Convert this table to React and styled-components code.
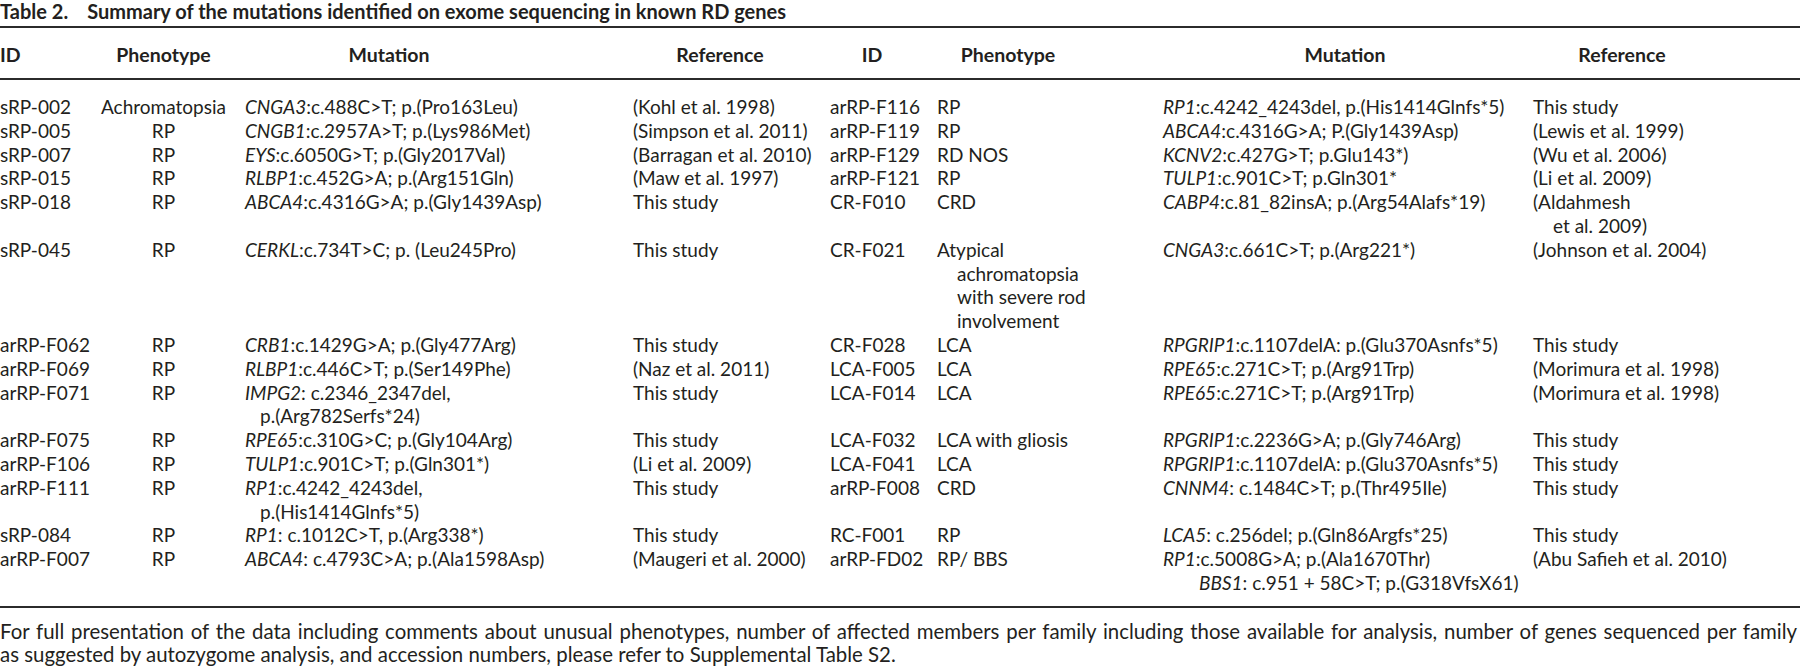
import React from "react";
import styled, { createGlobalStyle } from "styled-components";

const GlobalStyle = createGlobalStyle`
  html, body { margin: 0; padding: 0; background: #ffffff; }
  body {
    font-family: "Lato", "Open Sans", "Liberation Sans", sans-serif;
    color: #231f20;
  }
`;

const COLUMNS = "82px 163px 388px 197px 107px 226px 370px 1fr";

const Page = styled.div`
  width: 1800px;
  font-size: 19px;
`;

const Title = styled.h1`
  margin: 0 0 4px 0;
  font-size: 20px;
  line-height: 22px;
  font-weight: 700;
  display: flex;
  gap: 19px;
  white-space: nowrap;
`;

const HeaderRow = styled.div`
  display: grid;
  grid-template-columns: ${COLUMNS};
  border-top: 2px solid #2b2b2b;
  border-bottom: 2px solid #2b2b2b;
  padding: 15px 0 11px 0;
`;

const HeadCell = styled.div`
  font-size: 19.5px;
  font-weight: 700;
  line-height: 24px;
  text-align: ${(p) => (p.$left ? "left" : "center")};
  padding-right: ${(p) => p.$shift || 0}px;
  white-space: nowrap;
`;

const Body = styled.div`
  display: grid;
  grid-template-columns: ${COLUMNS};
  border-bottom: 2px solid #2b2b2b;
  padding: 15px 0 11px 0;
  line-height: 23.8px;
`;

const Cell = styled.div`
  text-align: ${(p) => (p.$center ? "center" : "left")};
  white-space: nowrap;
`;

const Line = styled.div`
  padding-left: ${(p) => p.$indent || 0}px;
`;

const Gene = styled.i`
  font-style: italic;
`;

const Footnote = styled.div`
  padding: 12px 3px 0 0;
  font-size: 20.4px;
  line-height: 23px;
`;

const FootLine = styled.div`
  white-space: nowrap;
  text-align: ${(p) => (p.$justify ? "justify" : "left")};
  text-align-last: ${(p) => (p.$justify ? "justify" : "auto")};
`;

const headers = [
  { label: "ID", left: true },
  { label: "Phenotype" },
  { label: "Mutation", shift: 100 },
  { label: "Reference", shift: 23 },
  { label: "ID", shift: 23 },
  { label: "Phenotype", shift: 84 },
  { label: "Mutation", shift: 6 },
  { label: "Reference", shift: 89 },
];

const m = (g, t, indent = 0) => ({ g, t, indent });

const rows = [
  {
    id: "sRP-002", ph: ["Achromatopsia"], mut: [m("CNGA3", ":c.488C>T; p.(Pro163Leu)")], ref: ["(Kohl et al. 1998)"],
    id2: "arRP-F116", ph2: ["RP"], mut2: [m("RP1", ":c.4242_4243del, p.(His1414Glnfs*5)")], ref2: ["This study"],
  },
  {
    id: "sRP-005", ph: ["RP"], mut: [m("CNGB1", ":c.2957A>T; p.(Lys986Met)")], ref: ["(Simpson et al. 2011)"],
    id2: "arRP-F119", ph2: ["RP"], mut2: [m("ABCA4", ":c.4316G>A; P.(Gly1439Asp)")], ref2: ["(Lewis et al. 1999)"],
  },
  {
    id: "sRP-007", ph: ["RP"], mut: [m("EYS", ":c.6050G>T; p.(Gly2017Val)")], ref: ["(Barragan et al. 2010)"],
    id2: "arRP-F129", ph2: ["RD NOS"], mut2: [m("KCNV2", ":c.427G>T; p.Glu143*)")], ref2: ["(Wu et al. 2006)"],
  },
  {
    id: "sRP-015", ph: ["RP"], mut: [m("RLBP1", ":c.452G>A; p.(Arg151Gln)")], ref: ["(Maw et al. 1997)"],
    id2: "arRP-F121", ph2: ["RP"], mut2: [m("TULP1", ":c.901C>T; p.Gln301*")], ref2: ["(Li et al. 2009)"],
  },
  {
    id: "sRP-018", ph: ["RP"], mut: [m("ABCA4", ":c.4316G>A; p.(Gly1439Asp)")], ref: ["This study"],
    id2: "CR-F010", ph2: ["CRD"], mut2: [m("CABP4", ":c.81_82insA; p.(Arg54Alafs*19)")], ref2: ["(Aldahmesh", "et al. 2009)"],
  },
  {
    id: "sRP-045", ph: ["RP"], mut: [m("CERKL", ":c.734T>C; p. (Leu245Pro)")], ref: ["This study"],
    id2: "CR-F021", ph2: ["Atypical", "achromatopsia", "with severe rod", "involvement"], mut2: [m("CNGA3", ":c.661C>T; p.(Arg221*)")], ref2: ["(Johnson et al. 2004)"],
  },
  {
    id: "arRP-F062", ph: ["RP"], mut: [m("CRB1", ":c.1429G>A; p.(Gly477Arg)")], ref: ["This study"],
    id2: "CR-F028", ph2: ["LCA"], mut2: [m("RPGRIP1", ":c.1107delA: p.(Glu370Asnfs*5)")], ref2: ["This study"],
  },
  {
    id: "arRP-F069", ph: ["RP"], mut: [m("RLBP1", ":c.446C>T; p.(Ser149Phe)")], ref: ["(Naz et al. 2011)"],
    id2: "LCA-F005", ph2: ["LCA"], mut2: [m("RPE65", ":c.271C>T; p.(Arg91Trp)")], ref2: ["(Morimura et al. 1998)"],
  },
  {
    id: "arRP-F071", ph: ["RP"], mut: [m("IMPG2", ": c.2346_2347del,"), m(null, "p.(Arg782Serfs*24)", 15)], ref: ["This study"],
    id2: "LCA-F014", ph2: ["LCA"], mut2: [m("RPE65", ":c.271C>T; p.(Arg91Trp)")], ref2: ["(Morimura et al. 1998)"],
  },
  {
    id: "arRP-F075", ph: ["RP"], mut: [m("RPE65", ":c.310G>C; p.(Gly104Arg)")], ref: ["This study"],
    id2: "LCA-F032", ph2: ["LCA with gliosis"], mut2: [m("RPGRIP1", ":c.2236G>A; p.(Gly746Arg)")], ref2: ["This study"],
  },
  {
    id: "arRP-F106", ph: ["RP"], mut: [m("TULP1", ":c.901C>T; p.(Gln301*)")], ref: ["(Li et al. 2009)"],
    id2: "LCA-F041", ph2: ["LCA"], mut2: [m("RPGRIP1", ":c.1107delA: p.(Glu370Asnfs*5)")], ref2: ["This study"],
  },
  {
    id: "arRP-F111", ph: ["RP"], mut: [m("RP1", ":c.4242_4243del,"), m(null, "p.(His1414Glnfs*5)", 15)], ref: ["This study"],
    id2: "arRP-F008", ph2: ["CRD"], mut2: [m("CNNM4", ": c.1484C>T; p.(Thr495Ile)")], ref2: ["This study"],
  },
  {
    id: "sRP-084", ph: ["RP"], mut: [m("RP1", ": c.1012C>T, p.(Arg338*)")], ref: ["This study"],
    id2: "RC-F001", ph2: ["RP"], mut2: [m("LCA5", ": c.256del; p.(Gln86Argfs*25)")], ref2: ["This study"],
  },
  {
    id: "arRP-F007", ph: ["RP"], mut: [m("ABCA4", ": c.4793C>A; p.(Ala1598Asp)")], ref: ["(Maugeri et al. 2000)"],
    id2: "arRP-FD02", ph2: ["RP/ BBS"], mut2: [m("RP1", ":c.5008G>A; p.(Ala1670Thr)"), m("BBS1", ": c.951 + 58C>T; p.(G318VfsX61)", 36)], ref2: ["(Abu Safieh et al. 2010)"],
  },
];

function TextLines({ lines, indent = 20 }) {
  return lines.map((l, i) => (
    <Line key={i} $indent={i === 0 ? 0 : indent}>
      {l}
    </Line>
  ));
}

function MutationLines({ lines }) {
  return lines.map((l, i) => (
    <Line key={i} $indent={l.indent}>
      {l.g && <Gene>{l.g}</Gene>}
      {l.t}
    </Line>
  ));
}

export default function App() {
  return (
    <Page>
      <GlobalStyle />
      <Title>
        <span>Table 2.</span>
        <span>Summary of the mutations identified on exome sequencing in known RD genes</span>
      </Title>
      <HeaderRow>
        {headers.map((h, i) => (
          <HeadCell key={i} $left={h.left} $shift={h.shift}>
            {h.label}
          </HeadCell>
        ))}
      </HeaderRow>
      <Body>
        {rows.map((r) => (
          <React.Fragment key={r.id}>
            <Cell>{r.id}</Cell>
            <Cell $center>
              <TextLines lines={r.ph} />
            </Cell>
            <Cell>
              <MutationLines lines={r.mut} />
            </Cell>
            <Cell>
              <TextLines lines={r.ref} />
            </Cell>
            <Cell>{r.id2}</Cell>
            <Cell>
              <TextLines lines={r.ph2} />
            </Cell>
            <Cell>
              <MutationLines lines={r.mut2} />
            </Cell>
            <Cell>
              <TextLines lines={r.ref2} />
            </Cell>
          </React.Fragment>
        ))}
      </Body>
      <Footnote>
        <FootLine $justify>
          For full presentation of the data including comments about unusual phenotypes, number of affected members per family including those available for analysis, number of genes sequenced per family
        </FootLine>
        <FootLine>
          as suggested by autozygome analysis, and accession numbers, please refer to Supplemental Table S2.
        </FootLine>
      </Footnote>
    </Page>
  );
}
